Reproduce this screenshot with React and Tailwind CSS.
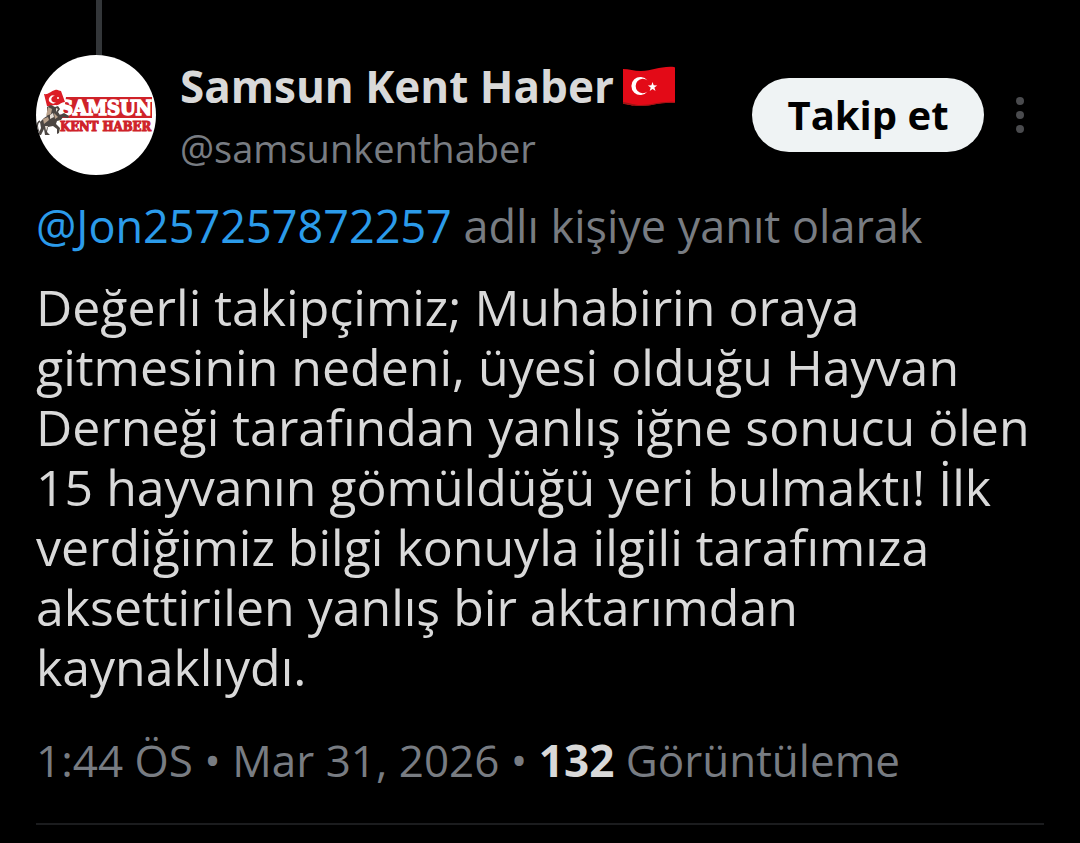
function Avatar() {
  return (
    <svg viewBox="0 0 120 120" className="block size-[120px] rounded-full bg-white" role="img" aria-label="Samsun Kent Haber logosu">
      <path d="M30 42h86v21H22l6-9z" fill="#cf2229" />
      <g fontFamily="'DejaVu Serif Condensed','DejaVu Serif',serif" fontWeight="700">
        <text x="24" y="60" fontSize="20" fill="#fff" stroke="#fff" strokeWidth="1.500">SAMSUN</text>
        <text x="24" y="76" fontSize="13" fill="#cf2229" stroke="#cf2229" strokeWidth="1">KENT HABER</text>
      </g>
      <path d="M8 39c4 1 7-3 11-4 3-1 4 1 6 1l4 11c-4 0-6 4-10 3-3 0-5 2-8 1z" fill="#dc1c26" />
      <path d="M19 41a4 4 0 1 0 1 6 3.200 3.200 0 1 1-1-6z" fill="#fff" />
      <circle cx="22" cy="43" r="1" fill="#fff" />
      <path d="M11 52l4-2 4 2 3-1 2 3-2 3 2 3 4-2 5 3-1 2-5-1-2 3-4 1-1 3 4 4-1 5-2 1v-5l-4-3-5 1-1 5 3 3H9l-1-6-3 6H2l3-7-1-6 4-4 3-2z" fill="#4b4542" />
      <path d="M12 52l4 2-1 5-5 2zM7 64l5-2 1 3-5 4zM18 58l4 4-3 2z" fill="#b9a08a" />
      <path d="M14 60l3-2 1 4-4 2zM9 71l3 0-2 5zM20 53l2 1-2 3z" fill="#e5ddd5" />
      <path d="M4 66c-4 2-3 7-1 11" stroke="#4b4542" strokeWidth="1.500" fill="none" />
    </svg>
  );
}

function TurkishFlag() {
  return (
    <svg viewBox="0 0 54 40" className="h-10 w-[54px] shrink-0" role="img" aria-label="Türkiye bayrağı">
      <path d="M1 3c6 0 11 2 18 2C31 5 38 0 52 1q1 0 1 1v34q0 1-1 1c-14-1-21 3-33 3-7 0-11-1-17-2q-1 0-1-1z" fill="#e30a17" />
      <path d="M1 36c8 1 11 3 18 3 12 0 19-4 34-3v1c-15-1-22 3-34 3-7 0-11-1-17-2q-1 0-1-2z" fill="#9d1414" />
      <path d="M25.500 14.500A9 9 0 1 0 25.500 25.500A7.200 7.200 0 1 1 25.500 14.500z" fill="#fff" />
      <path d="M30.500 16l1.200 3.300 3.500.2-2.800 2.100 1.100 3.400-2.900-2-2.900 2 1-3.400-2.800-2.100 3.500-.2z" fill="#fff" />
    </svg>
  );
}

export default function App() {
  return (
    <main className="min-h-screen bg-black font-['Open_Sans','Noto_Sans',sans-serif] text-[#d9d9d9]">
      <article className="px-9">
        <div className="ml-15 h-[55px] w-1.5 bg-[#333639]" />
        <header className="flex h-[120px] items-center">
          <a href="#profil" className="shrink-0">
            <Avatar />
          </a>
          <div className="ml-6 min-w-0 flex-1 pt-1">
            <h1 className="flex items-center gap-2 text-[44px] leading-[62px] font-bold whitespace-nowrap">
              Samsun Kent Haber
              <TurkishFlag />
            </h1>
            <p className="text-[38px] leading-[62px] text-[#787c82]">@samsunkenthaber</p>
          </div>
          <button type="button" className="h-[74px] w-[232px] shrink-0 rounded-full bg-[#eff3f4] text-[40px] leading-[74px] font-bold text-black">
            Takip et
          </button>
          <button type="button" aria-label="Diğer seçenekler" className="mr-5 ml-8 flex shrink-0 flex-col gap-1.5">
            <span className="size-2 rounded-full bg-[#4a4b4e]" />
            <span className="size-2 rounded-full bg-[#4a4b4e]" />
            <span className="size-2 rounded-full bg-[#4a4b4e]" />
          </button>
        </header>
        <p className="mt-5 text-[45px] leading-[62px] text-[#787c82]">
          <a href="#jon" className="text-[#2b9bea]">@Jon257257872257</a> adlı kişiye yanıt olarak
        </p>
        <p className="mt-5 text-[50px] leading-[60px]">
          Değerli takipçimiz; Muhabirin oraya gitmesinin nedeni, üyesi olduğu Hayvan Derneği tarafından yanlış iğne sonucu ölen 15 hayvanın gömüldüğü yeri bulmaktı! İlk verdiğimiz bilgi konuyla ilgili tarafımıza aksettirilen yanlış bir aktarımdan kaynaklıydı.
        </p>
        <p className="mt-8 text-[44px] leading-[62px] text-[#787c82]">
          1:44 ÖS • Mar 31, 2026 • <strong className="font-bold text-[#d9d9d9]">132</strong> Görüntüleme
        </p>
        <hr className="mt-8 border-t-2 border-[#1b1c1e]" />
      </article>
    </main>
  );
}
